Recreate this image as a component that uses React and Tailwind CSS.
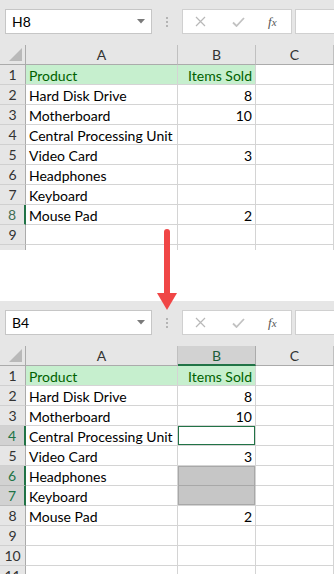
import React from "react";

const rows = [
  ["Product", "Items Sold"],
  ["Hard Disk Drive", "8"],
  ["Motherboard", "10"],
  ["Central Processing Unit", ""],
  ["Video Card", "3"],
  ["Headphones", ""],
  ["Keyboard", ""],
  ["Mouse Pad", "2"],
  ["", ""],
  ["", ""],
  ["", ""],
];

function FormulaBar({ name }) {
  return (
    <div className="h-[45px] bg-[#e6e6e6] flex items-start pt-[9px] pl-[5px] font-[Lato,sans-serif]">
      <div className="w-[147px] h-[25px] bg-white border border-[#c6c6c6] flex items-center justify-between pl-[6px] pr-[6px]">
        <span className="text-[14px] text-black leading-none">{name}</span>
        <svg width="8" height="5" viewBox="0 0 8 5">
          <path d="M0 0 L8 0 L4 4.5 Z" fill="#7a7a7a" />
        </svg>
      </div>
      <div className="w-[30px] h-[25px] flex flex-col items-center justify-center gap-[2px]">
        <span className="w-[2px] h-[2px] bg-[#b4b4b4]" />
        <span className="w-[2px] h-[2px] bg-[#b4b4b4]" />
        <span className="w-[2px] h-[2px] bg-[#b4b4b4]" />
      </div>
      <div className="w-[110px] h-[25px] bg-white border border-[#d0d0d0] flex items-center">
        <svg className="ml-[12px]" width="11" height="11" viewBox="0 0 11 11">
          <path d="M1 1 L10 10 M10 1 L1 10" stroke="#b8b8b8" strokeWidth="1.2" />
        </svg>
        <svg className="ml-[26px]" width="13" height="10" viewBox="0 0 13 10">
          <path d="M1 5.5 L4.5 9 L12 1" stroke="#c2c2c2" strokeWidth="1.8" fill="none" />
        </svg>
        <span className="ml-[23px] text-[13px] italic font-['Liberation_Serif',serif] text-[#555]">
          f<span className="text-[11px]">x</span>
        </span>
      </div>
      <div className="ml-[3px] flex-1 h-[25px] bg-white border border-[#d0d0d0] border-r-0" />
    </div>
  );
}

function Corner() {
  return (
    <div className="w-[26px] h-full border-r border-b border-[#ababab] bg-[#e6e6e6] flex items-end justify-end pr-[3px] pb-[3px]">
      <svg width="13" height="13" viewBox="0 0 13 13">
        <path d="M13 0 L13 13 L0 13 Z" fill="#b9b9b9" />
      </svg>
    </div>
  );
}

function ColHead({ label, width, active }) {
  return (
    <div
      className={`${width} h-full shrink-0 flex items-center justify-center text-[14px] ${
        active
          ? "bg-[#d2d2d2] text-[#1e5e3a] border-r border-[#ababab] border-b-2 border-b-[#217346]"
          : "bg-[#e6e6e6] text-[#333] border-r border-b border-[#c0c0c0] border-b-[#ababab]"
      }`}
    >
      {label}
    </div>
  );
}

function RowHead({ n, state }) {
  if (state === "active") {
    return (
      <div className="w-[26px] shrink-0 h-full bg-[#d2d2d2] text-[#217346] border-b border-[#bdbdbd] border-r-2 border-r-[#217346] flex items-center justify-center text-[14px]">
        {n}
      </div>
    );
  }
  if (state === "mark") {
    return (
      <div className="w-[26px] shrink-0 h-full bg-[#e6e6e6] text-[#3f6e54] border-b border-[#d0d0d0] border-r-2 border-r-[#217346] flex items-center justify-center text-[14px]">
        {n}
      </div>
    );
  }
  return (
    <div className="w-[26px] shrink-0 h-full bg-[#e6e6e6] text-[#333] border-b border-[#d0d0d0] border-r border-r-[#ababab] flex items-center justify-center text-[14px]">
      {n}
    </div>
  );
}

function Grid({ activeCol, rowStates, bCell, labelled }) {
  return (
    <div className="font-[Lato,sans-serif]">
      <div className="flex h-[20px]">
        <Corner />
        <ColHead label="A" width="w-[152px]" />
        <ColHead label="B" width="w-[78px]" active={activeCol === "B"} />
        <ColHead label="C" width="w-[78px]" />
      </div>
      {rows.map((r, i) => {
        const n = i + 1;
        const head = i === 0;
        const b = bCell ? bCell(n) : null;
        return (
          <div key={n} className="flex h-[20px]">
            <RowHead n={n <= labelled ? n : ""} state={rowStates[n]} />
            <div
              className={`w-[152px] shrink-0 h-full border-r border-b border-[#d4d4d4] flex items-center pl-[3px] pt-[1px] text-[14px] whitespace-nowrap ${
                head ? "bg-[#c6efce] text-[#006100] border-[#c6efce]" : "text-black"
              }`}
            >
              {r[0]}
            </div>
            <div
              className={`w-[78px] shrink-0 h-full border-r border-b border-[#d4d4d4] flex items-center justify-end pr-[3px] pt-[1px] text-[14px] ${
                head ? "bg-[#c6efce] text-[#006100] border-[#c6efce] border-b-[#d4d4d4]" : "text-black"
              } ${b || ""}`}
            >
              {r[1]}
            </div>
            <div className="w-[78px] shrink-0 h-full border-r border-b border-[#d4d4d4]" />
          </div>
        );
      })}
    </div>
  );
}

export default function App() {
  return (
    <div className="relative w-[334px] h-[574px] overflow-hidden bg-white">
      <div>
        <FormulaBar name="H8" />
        <div className="h-[205px] overflow-hidden">
          <Grid activeCol={null} rowStates={{ 8: "mark" }} labelled={9} />
        </div>
      </div>
      <div className="h-[51px]" />
      <div>
        <FormulaBar name="B4" />
        <Grid
          activeCol="B"
          labelled={11}
          rowStates={{ 4: "active", 6: "active", 7: "active" }}
          bCell={(n) =>
            n === 4
              ? "shadow-[inset_0_0_0_1px_#217346]"
              : n === 6
              ? "bg-[#c6c6c6] shadow-[inset_1px_1px_0_0_#a8a8a8,inset_-1px_0_0_0_#a8a8a8] border-b-[#a8a8a8]"
              : n === 7
              ? "bg-[#c6c6c6] shadow-[inset_1px_0_0_0_#a8a8a8,inset_-1px_-1px_0_0_#a8a8a8]"
              : ""
          }
        />
      </div>

      {/* red arrow between the two shots */}
      <svg className="absolute left-[155px] top-[229px]" width="24" height="83" viewBox="0 0 24 83">
        <rect x="9" y="0" width="6" height="68" rx="3" fill="#f04646" />
        <path d="M2 64 L22 64 L12 81 Z" fill="#f04646" />
      </svg>
    </div>
  );
}
